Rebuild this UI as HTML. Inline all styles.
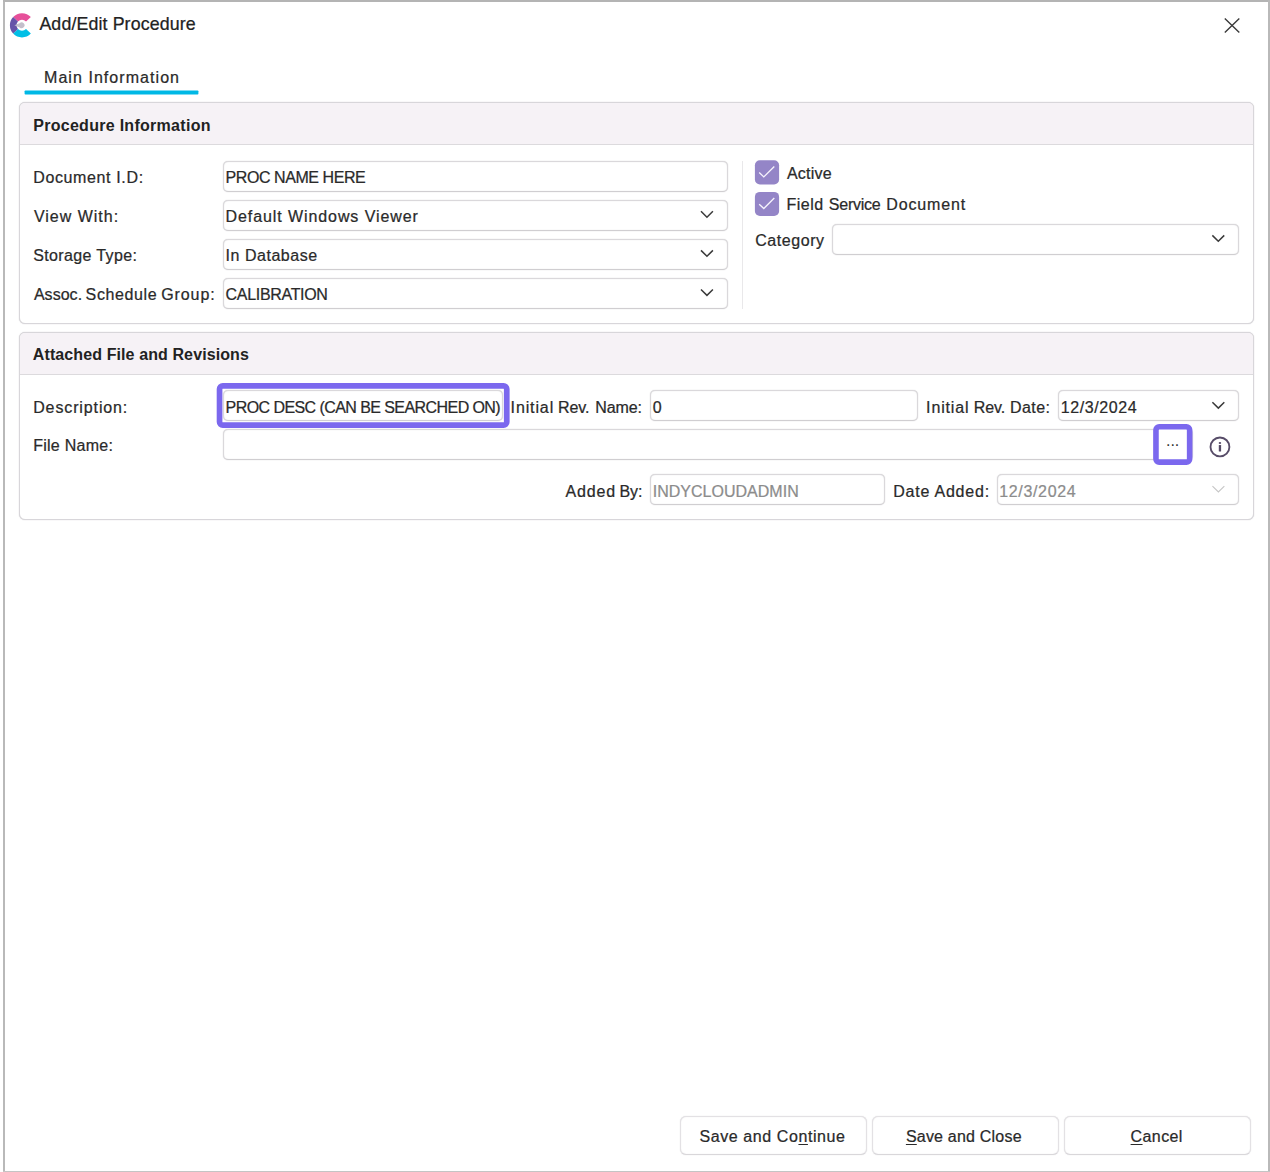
<!DOCTYPE html>
<html lang="en">
<head>
<meta charset="utf-8">
<title>Add/Edit Procedure</title>
<style>
html,body{margin:0;padding:0;background:#fff;}
body{width:1270px;height:1172px;position:relative;overflow:hidden;font-family:"Liberation Sans",sans-serif;}
#win{position:absolute;left:0;top:0;width:1270px;height:1172px;background:#fff;overflow:hidden;}
.abs{position:absolute;}
.t{-webkit-text-stroke:0.24px currentColor;position:absolute;white-space:pre;line-height:20px;height:20px;font-family:"Liberation Sans",sans-serif;}
.t.b{-webkit-text-stroke:0;}
.t u{text-decoration:underline;text-decoration-thickness:1px;text-underline-offset:2px;}
.bl{position:absolute;left:3px;top:0;width:2px;height:1172px;background:#b9b9b9;}
.bt{position:absolute;left:3px;top:0;width:1267px;height:2px;background:#b4b4b4;}
.br{position:absolute;left:1268px;top:0;width:2px;height:1172px;background:#b9b9b9;}
.bb{position:absolute;left:3px;top:1171px;width:1267px;height:1px;background:#c4c4c4;}
.grp{position:absolute;box-sizing:border-box;border:1px solid #d8d6da;box-shadow:0 0 1px rgba(110,105,115,.45);border-radius:6px;background:#fff;overflow:hidden;}
.grp .hd{position:absolute;left:0;top:0;right:0;height:41px;background:#f6f2f6;border-bottom:1px solid #dcdadd;}
.in{position:absolute;box-sizing:border-box;height:31px;border:1px solid #dad8db;border-bottom-color:#d0ced1;box-shadow:0 0 1px rgba(110,105,115,.4), inset 0 0 1px rgba(110,105,115,.3);border-radius:5px;background:#fff;}
.btn{position:absolute;box-sizing:border-box;top:1116px;width:187px;height:39px;border:1px solid #e3e1e4;border-bottom-color:#d9d7da;border-radius:6px;background:#fff;box-shadow:0 0 1px rgba(110,105,115,.3), inset 0 0 1px rgba(110,105,115,.2);}
svg{position:absolute;overflow:visible;}
</style>
</head>
<body>
<div id="win">
  <div class="bl"></div><div class="bt"></div><div class="br"></div><div class="bb"></div>

  <!-- group 1 -->
  <div class="grp" style="left:19px;top:102px;width:1235px;height:222px"><div class="hd"></div></div>
  <div class="in" style="left:223px;top:161px;width:505px"></div>
  <div class="in" style="left:223px;top:200px;width:505px"></div>
  <div class="in" style="left:223px;top:239px;width:505px"></div>
  <div class="in" style="left:223px;top:278px;width:505px"></div>
  <div class="abs" style="left:742px;top:161px;width:1px;height:148px;background:#e9e8ea"></div>
  <div class="in" style="left:832px;top:224px;width:407px"></div>

  <!-- group 2 -->
  <div class="grp" style="left:19px;top:332px;width:1235px;height:188px"><div class="hd"></div></div>
  <div class="in" style="left:223px;top:390px;width:280px"></div>
  <div class="in" style="left:650px;top:390px;width:268px"></div>
  <div class="in" style="left:1058px;top:390px;width:181px"></div>
  <div class="in" style="left:223px;top:429px;width:970px"></div>
  <div class="in" style="left:650px;top:474px;width:235px"></div>
  <div class="in" style="left:996.5px;top:474px;width:242.5px"></div>

  <!-- buttons -->
  <div class="btn" style="left:680px"></div>
  <div class="btn" style="left:872px"></div>
  <div class="btn" style="left:1064px"></div>


  <svg id="gfx" style="left:0;top:0" width="1270" height="1172" viewBox="0 0 1270 1172">
    <!-- app icon -->
    <g fill="none" stroke-width="6.6">
      <path d="M 28.44 19.30 A 8.8 8.8 0 0 0 15.56 19.30" stroke="#e6509a"/>
      <path d="M 15.56 31.30 A 8.8 8.8 0 0 0 28.44 31.30" stroke="#00bfe6"/>
      <path d="M 15.56 19.30 A 8.8 8.8 0 0 0 15.56 31.30" stroke="#6653a8"/>
    </g>
    <path d="M 14.4 25.3 L 19.6 23.2 A 2.9 2.9 0 1 1 19.6 27.4 Z" fill="#c3bfcb"/>
    <!-- tab underline -->
    <rect x="24.6" y="90.55" width="173.8" height="3.95" rx="0.8" fill="#00b8e5"/>
    <!-- close X -->
    <path d="M1224.8 18.5 L1239.3 32.5 M1239.3 18.5 L1224.8 32.5" stroke="#3a3a3a" stroke-width="1.4" fill="none"/>
    <!-- checkboxes -->
    <rect x="754.9" y="160.3" width="24.2" height="24.1" rx="5" fill="#9485c7"/><path d="M759.20 172.60 L763.80 176.90 L774.30 166.50" stroke="#f6f3fc" stroke-width="1.35" fill="none"/>
    <rect x="754.9" y="191.9" width="24.2" height="24.1" rx="5" fill="#9485c7"/><path d="M759.20 204.20 L763.80 208.50 L774.30 198.10" stroke="#f6f3fc" stroke-width="1.35" fill="none"/>
    <!-- chevrons -->
    <path d="M701.00 211.30 L706.95 217.20 L712.90 211.30" stroke="#3a3a3a" stroke-width="1.5" fill="none"/>
    <path d="M701.00 250.35 L706.95 256.25 L712.90 250.35" stroke="#3a3a3a" stroke-width="1.5" fill="none"/>
    <path d="M701.00 289.45 L706.95 295.35 L712.90 289.45" stroke="#3a3a3a" stroke-width="1.5" fill="none"/>
    <path d="M1212.35 235.35 L1218.30 241.25 L1224.25 235.35" stroke="#3a3a3a" stroke-width="1.5" fill="none"/>
    <path d="M1212.40 402.25 L1218.35 408.15 L1224.30 402.25" stroke="#3a3a3a" stroke-width="1.5" fill="none"/>
    <path d="M1212.45 486.05 L1218.40 491.95 L1224.35 486.05" stroke="#c6c6c6" stroke-width="1.1" fill="none"/>
    <!-- highlight frames -->
    <rect x="219.55" y="385.85" width="287.2" height="39.3" rx="3.2" fill="none" stroke="#7b68ee" stroke-width="5.7"/>
    <rect x="1155.95" y="426.8" width="33.7" height="35.3" rx="3.2" fill="#fff" stroke="#7b68ee" stroke-width="5.6"/>
    <!-- info icon -->
    <circle cx="1219.95" cy="446.95" r="9.45" fill="none" stroke="#574c68" stroke-width="1.85"/>
    <ellipse cx="1219.95" cy="443.0" rx="1.25" ry="1.0" fill="#554a66"/>
    <rect x="1218.8" y="444.9" width="2.3" height="6.7" rx="0.5" fill="#554a66"/>
  </svg>

<span class="t" style="left:39.40px;top:13.78px;font-size:17.8px;font-weight:400;color:#222;letter-spacing:0.120px">Add/Edit Procedure</span>
<span class="t" style="left:44.00px;top:68.11px;font-size:16px;font-weight:400;color:#2a2a2a;letter-spacing:1.055px">Main Information</span>
<span class="t b" style="left:33.20px;top:116.01px;font-size:16px;font-weight:700;color:#222;letter-spacing:0.286px">Procedure Information</span>
<span class="t" style="left:33.20px;top:168.11px;font-size:16px;font-weight:400;color:#2a2a2a;letter-spacing:0.636px">Document I.D:</span>
<span class="t" style="left:33.90px;top:207.01px;font-size:16px;font-weight:400;color:#2a2a2a;letter-spacing:0.991px">View With:</span>
<span class="t" style="left:33.20px;top:246.01px;font-size:16px;font-weight:400;color:#2a2a2a;letter-spacing:0.364px">Storage Type:</span>
<span class="t" style="left:33.90px;top:285.01px;font-size:16px;font-weight:400;color:#2a2a2a;letter-spacing:0.037px">Assoc. </span>
<span class="t" style="left:85.60px;top:285.01px;font-size:16px;font-weight:400;color:#2a2a2a;letter-spacing:0.626px">Schedule </span>
<span class="t" style="left:161.20px;top:285.01px;font-size:16px;font-weight:400;color:#2a2a2a;letter-spacing:0.916px">Group:</span>
<span class="t" style="left:225.60px;top:167.76px;font-size:16px;font-weight:400;color:#2a2a2a;letter-spacing:-0.438px">PROC NAME HERE</span>
<span class="t" style="left:225.60px;top:207.01px;font-size:16px;font-weight:400;color:#2a2a2a;letter-spacing:0.909px">Default Windows Viewer</span>
<span class="t" style="left:225.60px;top:246.01px;font-size:16px;font-weight:400;color:#2a2a2a;letter-spacing:0.522px">In Database</span>
<span class="t" style="left:225.60px;top:285.01px;font-size:16px;font-weight:400;color:#2a2a2a;letter-spacing:-0.320px">CALIBRATION</span>
<span class="t" style="left:786.90px;top:164.31px;font-size:16px;font-weight:400;color:#2a2a2a;letter-spacing:0.224px">Active</span>
<span class="t" style="left:786.50px;top:195.41px;font-size:16px;font-weight:400;color:#2a2a2a;letter-spacing:0.503px">Field </span>
<span class="t" style="left:828.80px;top:195.41px;font-size:16px;font-weight:400;color:#2a2a2a;letter-spacing:-0.243px">Service </span>
<span class="t" style="left:886.30px;top:195.41px;font-size:16px;font-weight:400;color:#2a2a2a;letter-spacing:0.868px">Document</span>
<span class="t" style="left:755.20px;top:230.51px;font-size:16px;font-weight:400;color:#2a2a2a;letter-spacing:0.568px">Category</span>
<span class="t b" style="left:32.80px;top:345.21px;font-size:16px;font-weight:700;color:#222;letter-spacing:0.104px">Attached File and Revisions</span>
<span class="t" style="left:33.20px;top:397.51px;font-size:16px;font-weight:400;color:#2a2a2a;letter-spacing:0.876px">Description:</span>
<span class="t" style="left:33.20px;top:436.21px;font-size:16px;font-weight:400;color:#2a2a2a;letter-spacing:0.260px">File Name:</span>
<span class="t" style="left:225.60px;top:397.51px;font-size:16px;font-weight:400;color:#2a2a2a;letter-spacing:-0.569px">PROC DESC (CAN BE SEARCHED ON)</span>
<span class="t" style="left:510.60px;top:397.51px;font-size:16px;font-weight:400;color:#2a2a2a;letter-spacing:0.873px">Initial </span>
<span class="t" style="left:557.90px;top:397.51px;font-size:16px;font-weight:400;color:#2a2a2a;letter-spacing:-0.040px">Rev. </span>
<span class="t" style="left:595.20px;top:397.51px;font-size:16px;font-weight:400;color:#2a2a2a;letter-spacing:-0.081px">Name:</span>
<span class="t" style="left:652.70px;top:397.51px;font-size:16px;font-weight:400;color:#2a2a2a;letter-spacing:0.000px">0</span>
<span class="t" style="left:926.10px;top:397.51px;font-size:16px;font-weight:400;color:#2a2a2a;letter-spacing:0.857px">Initial </span>
<span class="t" style="left:973.80px;top:397.51px;font-size:16px;font-weight:400;color:#2a2a2a;letter-spacing:-0.073px">Rev. </span>
<span class="t" style="left:1010.10px;top:397.51px;font-size:16px;font-weight:400;color:#2a2a2a;letter-spacing:0.387px">Date:</span>
<span class="t" style="left:1060.70px;top:397.51px;font-size:16px;font-weight:400;color:#2a2a2a;letter-spacing:0.602px">12/3/2024</span>
<span class="t" style="left:565.60px;top:481.51px;font-size:16px;font-weight:400;color:#2a2a2a;letter-spacing:0.834px">Added </span>
<span class="t" style="left:619.40px;top:481.51px;font-size:16px;font-weight:400;color:#2a2a2a;letter-spacing:-0.062px">By:</span>
<span class="t" style="left:652.70px;top:481.51px;font-size:16px;font-weight:400;color:#8c8c8c;letter-spacing:0.016px">INDYCLOUDADMIN</span>
<span class="t" style="left:893.20px;top:481.51px;font-size:16px;font-weight:400;color:#2a2a2a;letter-spacing:0.782px">Date Added:</span>
<span class="t" style="left:999.20px;top:481.51px;font-size:16px;font-weight:400;color:#8c8c8c;letter-spacing:0.664px">12/3/2024</span>
<span class="t b" style="left:1166.00px;top:430.71px;font-size:16px;font-weight:400;color:#333;letter-spacing:-0.022px">...</span>
<span class="t" style="left:699.40px;top:1126.51px;font-size:16px;font-weight:400;color:#2a2a2a;letter-spacing:0.593px">Save and Co<u>n</u>tinue</span>
<span class="t" style="left:905.90px;top:1126.51px;font-size:16px;font-weight:400;color:#2a2a2a;letter-spacing:0.210px"><u>S</u>ave and Close</span>
<span class="t" style="left:1130.60px;top:1126.51px;font-size:16px;font-weight:400;color:#2a2a2a;letter-spacing:0.397px"><u>C</u>ancel</span>
</div>
</body>
</html>
